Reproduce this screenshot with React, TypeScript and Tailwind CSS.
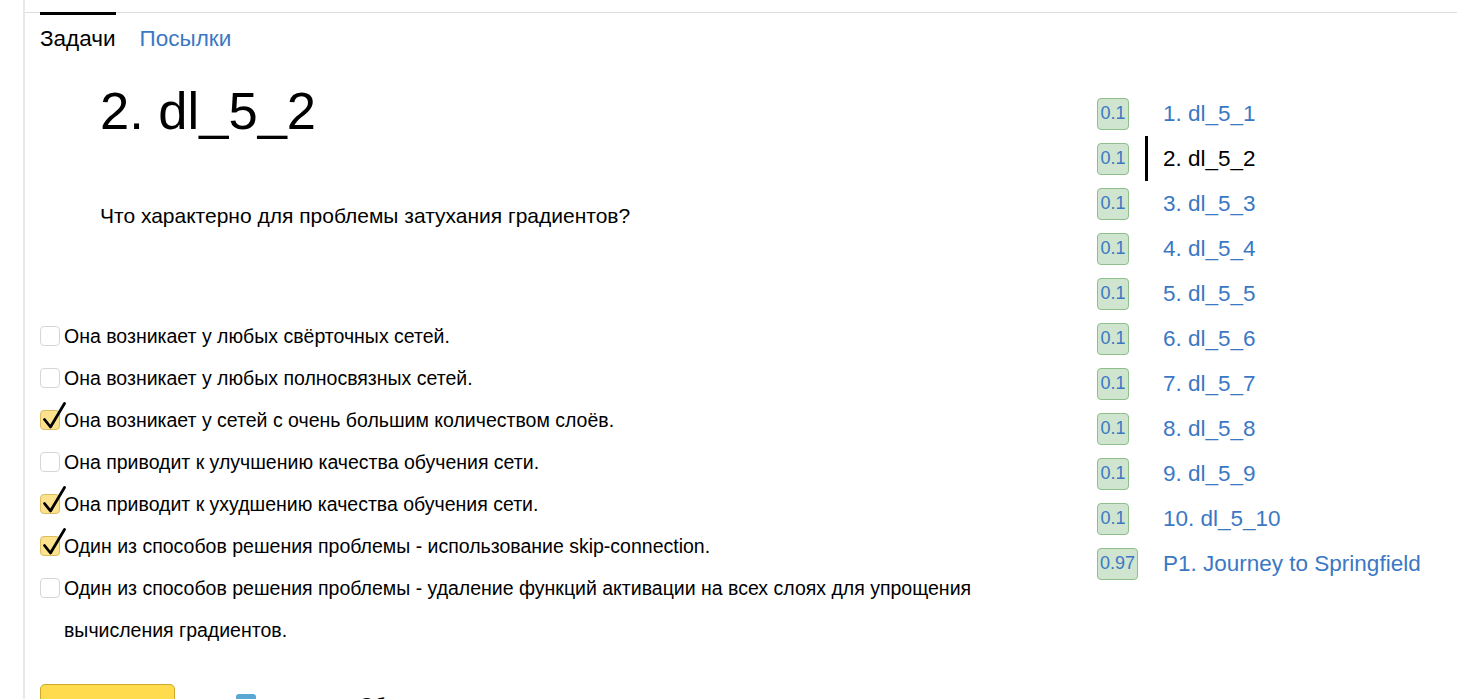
const font = { fontFamily: '"Liberation Sans", Arial, sans-serif' };

const options = [
  { text: 'Она возникает у любых свёрточных сетей.', checked: false },
  { text: 'Она возникает у любых полносвязных сетей.', checked: false },
  { text: 'Она возникает у сетей с очень большим количеством слоёв.', checked: true },
  { text: 'Она приводит к улучшению качества обучения сети.', checked: false },
  { text: 'Она приводит к ухудшению качества обучения сети.', checked: true },
  { text: 'Один из способов решения проблемы - использование skip-connection.', checked: true },
  {
    text: 'Один из способов решения проблемы - удаление функций активации на всех слоях для упрощения вычисления градиентов.',
    checked: false,
  },
];

const problems = [
  { score: '0.1', name: '1. dl_5_1' },
  { score: '0.1', name: '2. dl_5_2', active: true },
  { score: '0.1', name: '3. dl_5_3' },
  { score: '0.1', name: '4. dl_5_4' },
  { score: '0.1', name: '5. dl_5_5' },
  { score: '0.1', name: '6. dl_5_6' },
  { score: '0.1', name: '7. dl_5_7' },
  { score: '0.1', name: '8. dl_5_8' },
  { score: '0.1', name: '9. dl_5_9' },
  { score: '0.1', name: '10. dl_5_10' },
  { score: '0.97', name: 'P1. Journey to Springfield' },
];

function Checkbox({ checked }: { checked: boolean }) {
  if (!checked) {
    return <span className="mt-[11px] h-5 w-5 shrink-0 rounded-[4px] border border-[#d6d6d6] bg-white" />;
  }
  return (
    <span className="relative mt-[11px] h-5 w-5 shrink-0 rounded-[4px] border border-[#dcbc62] bg-[#fde28e]">
      <svg className="absolute left-[1px] top-[-9px]" width="24" height="28" viewBox="0 0 24 28">
        <path d="M2.5 17.5 L8.5 25 L22.5 1.5" fill="none" stroke="black" strokeWidth="2.8" strokeLinecap="round" strokeLinejoin="round" />
      </svg>
    </span>
  );
}

export default function App() {
  return (
    <div className="min-h-screen bg-white text-black" style={font}>
      <div className="ml-[23px] min-h-screen border-l-2 border-[#e8e8e8] pt-3">
        <div className="flex border-t border-[#dddddd] pl-[15px] text-[22.5px]">
          <div className="-mt-px border-t-[3px] border-black pt-[11px] leading-[25px]">Задачи</div>
          <div className="ml-6 pt-[13px] leading-[25px] text-[#3b78c4]">Посылки</div>
        </div>

        <div className="flex pl-[15px]">
          <div className="w-[975px] shrink-0">
            <h1 className="mt-[30px] pl-[60px] text-[52.5px] leading-[60px]">2. dl_5_2</h1>
            <p className="mt-[60px] pl-[60px] text-[21px] leading-[30px]">Что характерно для проблемы затухания градиентов?</p>

            <div className="mt-[84px] flex flex-col">
              {options.map((o) => (
                <label key={o.text} className="flex gap-1 text-[19.5px] leading-[42px]">
                  <Checkbox checked={o.checked} />
                  <span>{o.text}</span>
                </label>
              ))}
            </div>

            <div className="mt-[33px] flex items-start">
              <button className="h-10 w-[135px] rounded-[5px] border border-[#cca92c] bg-[#ffdb4d] pt-[9px] text-[19.5px] leading-6">
                Отправить
              </button>
              <span className="ml-[61px] mt-[10px] h-5 w-5 rounded-[3px] bg-[#5aa7d3]" />
              <span className="ml-[103px] mt-[9px] text-[19.5px] leading-6">Обсуждение</span>
            </div>
          </div>

          <div className="ml-[82px] mt-[40px] flex flex-col">
            {problems.map((p) => (
              <div key={p.name} className="flex h-[45px] items-center">
                <span className="w-12 shrink-0">
                  <span className="inline-flex h-8 min-w-8 items-center justify-center rounded-[4px] border border-[#8fbf8a] bg-[#cfe5cf] px-[2px] text-[18px] text-[#3b78c4]">
                    {p.score}
                  </span>
                </span>
                <span className={'h-full w-[3px] ' + (p.active ? 'bg-black' : 'bg-transparent')} />
                <span className={'ml-[15px] text-[22.5px] ' + (p.active ? 'text-black' : 'text-[#3b78c4]')}>{p.name}</span>
              </div>
            ))}
          </div>
        </div>
      </div>
    </div>
  );
}
